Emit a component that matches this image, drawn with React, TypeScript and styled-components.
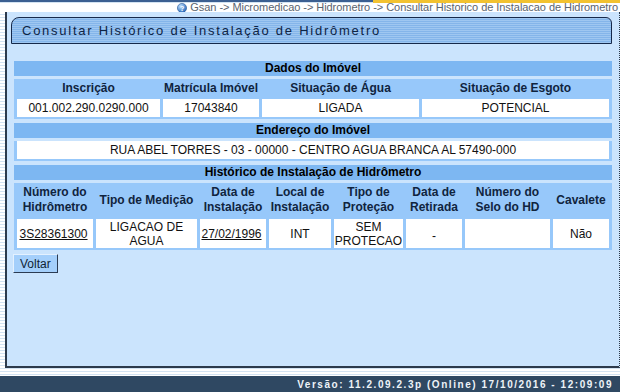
import styled, { createGlobalStyle } from 'styled-components';

const GlobalStyle = createGlobalStyle`
    html, body {
        margin: 0;
        padding: 0;
    }
    body {
        width: 620px;
        height: 392px;
        overflow: hidden;
        font-family: 'Liberation Sans', Arial, sans-serif;
        background: repeating-linear-gradient(
            to bottom,
            #ffffff 0px,
            #ffffff 2px,
            #d3e3f2 2px,
            #d3e3f2 3px
        );
    }
`;

const Page = styled.div`
    display: flex;
    flex-direction: column;
    width: 620px;
    height: 392px;
`;

const TopLine = styled.div`
    display: flex;
    height: 3px;
    div:first-child {
        flex: 0 0 373px;
        height: 2px;
        background-color: #3b5f91;
    }
    div:last-child {
        flex: 1;
        background-color: #f2c230;
    }
`;

const Breadcrumb = styled.div`
    height: 9px;
    display: flex;
    justify-content: flex-end;
    align-items: center;
    gap: 3px;
    padding-right: 2px;
    background-color: #fff;
    font-size: 11px;
    line-height: 9px;
    color: #5a6470;
    letter-spacing: -0.05px;
    svg {
        flex: 0 0 auto;
    }
`;

const Body = styled.div`
    display: flex;
    height: 356px;
    padding-left: 5px;
`;

const Panel = styled.div`
    flex: 1;
    background-color: #cbe4fd;
    border-left: 2px solid #2c3a4c;
    border-right: 1px dotted #2c3a4c;
    border-bottom: 2px solid #2c3a4c;
    padding: 5px 7px 0 4px;
    display: flex;
    flex-direction: column;
`;

const TitleBar = styled.div`
    height: 25px;
    border: 1px solid #16294a;
    border-radius: 8px 6px 0 0;
    background: repeating-linear-gradient(
        to bottom,
        #9fc7f1 0px,
        #9fc7f1 1px,
        #84b5ea 1px,
        #84b5ea 2px
    );
    display: flex;
    align-items: center;
    padding-left: 10px;
    font-size: 13px;
    letter-spacing: 1.75px;
    color: #0e2444;
    margin-bottom: 17px;
`;

const Section = styled.div`
    margin: 0 0 4px 3px;
    display: flex;
    flex-direction: column;
    gap: 3px;
`;

const SectionHeader = styled.div`
    height: 15px;
    background-color: #7db7f2;
    text-align: center;
    font-size: 12px;
    font-weight: 700;
    line-height: 15px;
    color: #000;
`;

const Grid = styled.div<{ cols: string }>`
    display: grid;
    grid-template-columns: ${(p) => p.cols};
    gap: 2px 3px;
    padding: 0 3px 2px;
    background-color: #97c8fa;
`;

const HeadCell = styled.div<{ tall?: boolean }>`
    height: ${(p) => (p.tall ? '34px' : '18px')};
    display: flex;
    align-items: center;
    justify-content: center;
    text-align: center;
    font-size: 12px;
    font-weight: 700;
    line-height: 15px;
    color: #10243e;
`;

const Cell = styled.div<{ tall?: boolean; low?: boolean }>`
    min-height: ${(p) => (p.tall ? '29px' : '18px')};
    background-color: #fff;
    display: flex;
    align-items: ${(p) => (p.low ? 'flex-end' : 'center')};
    padding-bottom: ${(p) => (p.low ? '5px' : '0')};
    box-sizing: border-box;
    justify-content: center;
    text-align: center;
    font-size: 12px;
    line-height: 14px;
    color: #111;
`;

const Link = styled.a`
    color: #111;
    text-decoration: underline;
    padding-right: 3px;
`;

const Voltar = styled.button`
    align-self: flex-start;
    margin-left: 2px;
    height: 19px;
    padding: 0 6px;
    background-color: #a4cffb;
    border: 1px solid;
    border-color: #e4f1ff #2b3b52 #2b3b52 #e4f1ff;
    font-family: 'Liberation Sans', Arial, sans-serif;
    font-size: 12px;
    color: #0f1f35;
`;

const Gap = styled.div`
    height: 8px;
`;

const Footer = styled.div`
    height: 16px;
    background-color: #2f4862;
    display: flex;
    align-items: center;
    justify-content: flex-end;
    padding-right: 7px;
    font-size: 10px;
    font-weight: 700;
    letter-spacing: 1.55px;
    color: #eef3f8;
`;

function HelpIcon() {
    return (
        <svg width="10" height="10" viewBox="0 0 10 10">
            <defs>
                <radialGradient id="hg" cx="35%" cy="30%" r="70%">
                    <stop offset="0%" stopColor="#bfe0ff" />
                    <stop offset="100%" stopColor="#2f6fbf" />
                </radialGradient>
            </defs>
            <circle cx="5" cy="5" r="4.6" fill="url(#hg)" stroke="#2a5a9a" strokeWidth="0.6" />
            <text x="5" y="8" fontSize="7" fontWeight="700" textAnchor="middle" fill="#fff" fontFamily="Liberation Sans, sans-serif">
                ?
            </text>
        </svg>
    );
}

const dadosCols = '143px 96px 157px 1fr';
const histCols = '76px 101px 66px 62px 69px 56px 85px 1fr';

function App() {
    return (
        <Page>
            <GlobalStyle />
            <TopLine>
                <div />
                <div />
            </TopLine>
            <Breadcrumb>
                <HelpIcon />
                <span>Gsan -&gt; Micromedicao -&gt; Hidrometro -&gt; Consultar Historico de Instalacao de Hidrometro</span>
            </Breadcrumb>
            <Body>
                <Panel>
                    <TitleBar>Consultar Histórico de Instalação de Hidrômetro</TitleBar>

                    <Section>
                        <SectionHeader>Dados do Imóvel</SectionHeader>
                        <Grid cols={dadosCols}>
                            <HeadCell>Inscrição</HeadCell>
                            <HeadCell>Matrícula Imóvel</HeadCell>
                            <HeadCell>Situação de Água</HeadCell>
                            <HeadCell>Situação de Esgoto</HeadCell>
                            <Cell>001.002.290.0290.000</Cell>
                            <Cell>17043840</Cell>
                            <Cell>LIGADA</Cell>
                            <Cell>POTENCIAL</Cell>
                        </Grid>
                    </Section>

                    <Section>
                        <SectionHeader>Endereço do Imóvel</SectionHeader>
                        <Grid cols="1fr">
                            <Cell>RUA ABEL TORRES - 03 - 00000 - CENTRO AGUA BRANCA AL 57490-000</Cell>
                        </Grid>
                    </Section>

                    <Section>
                        <SectionHeader>Histórico de Instalação de Hidrômetro</SectionHeader>
                        <Grid cols={histCols}>
                            <HeadCell tall>Número do<br />Hidrômetro</HeadCell>
                            <HeadCell tall>Tipo de Medição</HeadCell>
                            <HeadCell tall>Data de<br />Instalação</HeadCell>
                            <HeadCell tall>Local de<br />Instalação</HeadCell>
                            <HeadCell tall>Tipo de<br />Proteção</HeadCell>
                            <HeadCell tall>Data de<br />Retirada</HeadCell>
                            <HeadCell tall>Número do<br />Selo do HD</HeadCell>
                            <HeadCell tall>Cavalete</HeadCell>
                            <Cell tall><Link>3S28361300</Link></Cell>
                            <Cell tall>LIGACAO DE<br />AGUA</Cell>
                            <Cell tall><Link>27/02/1996</Link></Cell>
                            <Cell tall>INT</Cell>
                            <Cell tall>SEM<br />PROTECAO</Cell>
                            <Cell tall low>-</Cell>
                            <Cell tall />
                            <Cell tall>Não</Cell>
                        </Grid>
                    </Section>

                    <Voltar>Voltar</Voltar>
                </Panel>
            </Body>
            <Gap />
            <Footer>Versão: 11.2.09.2.3p (Online) 17/10/2016 - 12:09:09</Footer>
        </Page>
    );
}

export default App;
